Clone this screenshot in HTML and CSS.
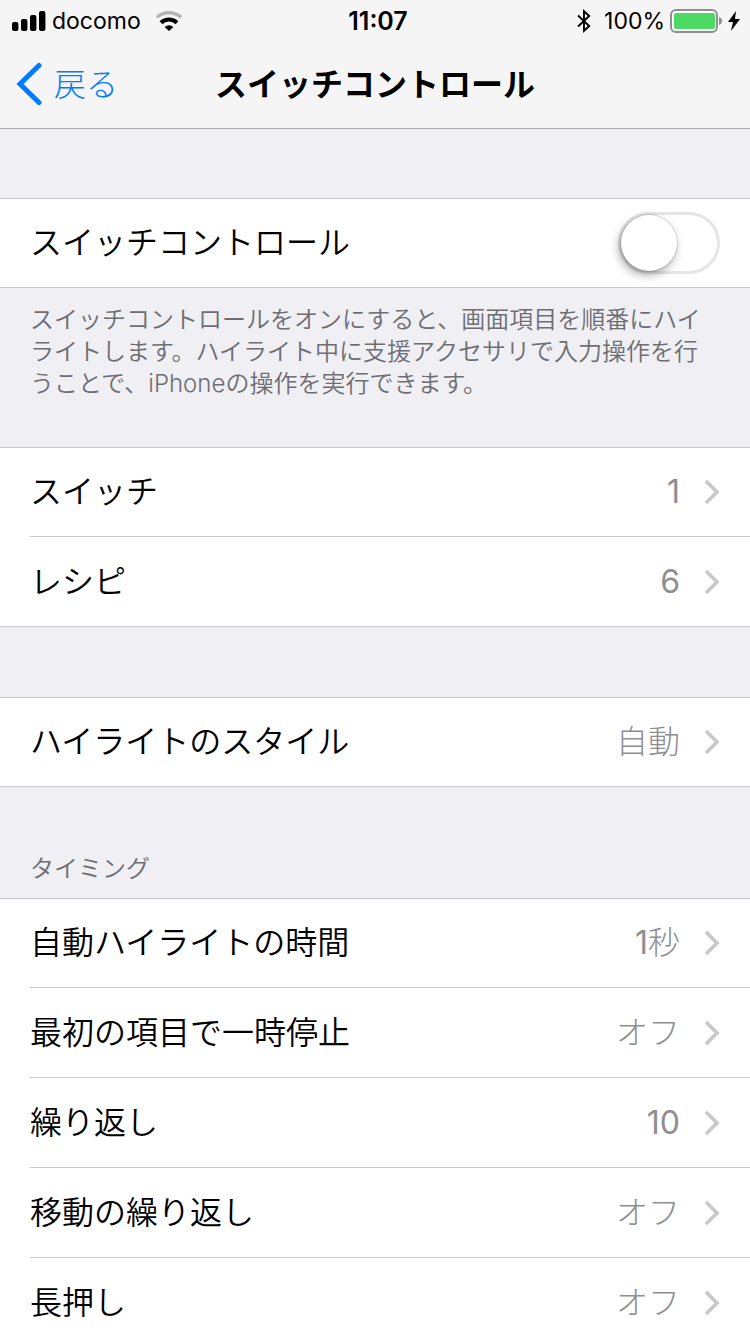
FILE: index.html
```html
<!DOCTYPE html>
<html lang="ja">
<head>
<meta charset="utf-8">
<meta name="viewport" content="width=device-width, initial-scale=1">
<title>スイッチコントロール</title>
<link rel="stylesheet" href="styles.css">
</head>
<body>
<svg class="defs" aria-hidden="true">
  <symbol id="chevron" viewBox="0 0 16 28"><path d="M2 3 13 14 2 25" fill="none" stroke="currentColor" stroke-width="3.6"/></symbol>
</svg>
<div class="screen">
  <header class="top">
    <div class="status">
      <div class="status-side">
        <svg class="signal" viewBox="0 0 34 22" width="34" height="22" aria-hidden="true">
          <rect x="0" y="12" width="6.4" height="9" rx="2"/><rect x="9" y="9" width="6.4" height="12" rx="2"/><rect x="18" y="5" width="6.4" height="16" rx="2"/><rect x="27" y="1" width="6.4" height="20" rx="2"/>
        </svg>
        <span class="carrier">docomo</span>
        <svg class="wifi" viewBox="0 0 28 20" width="28" height="20" aria-hidden="true">
          <path d="M1.800 6.200a18.800 18.800 0 0 1 24.400 0" fill="none" stroke="#b4b4b6" stroke-width="3.400"/>
          <path d="M6 11.800a11.600 11.600 0 0 1 16 0" fill="none" stroke="#000" stroke-width="4"/>
          <path d="M14 20 9.600 16q4.400-3.400 8.800 0z"/>
        </svg>
      </div>
      <time class="clock">11:07</time>
      <div class="status-side status-end">
        <svg class="bluetooth" viewBox="0 0 14 24" width="14" height="24" aria-hidden="true">
          <path d="M1 6.500 12.200 17 7 21.800V2.200L12.200 7 1 17.500" fill="none" stroke="#000" stroke-width="1.900"/>
        </svg>
        <span class="percent">100%</span>
        <svg class="battery" viewBox="0 0 53 24" width="53" height="24" aria-hidden="true">
          <rect x="1" y="1" width="46" height="22" rx="5" fill="#fff" stroke="#8e8e93" stroke-width="2"/>
          <rect x="4" y="4" width="41" height="16" rx="2" fill="#4cd964"/>
          <path d="M49 8q3 1.200 3 4t-3 4z" fill="#8e8e93"/>
        </svg>
        <svg class="bolt" viewBox="0 0 12 20" width="12" height="20" aria-hidden="true"><path d="M8 0 0 11h5L3 20l9-12H7z"/></svg>
      </div>
    </div>
    <nav class="navbar">
      <button class="back" type="button">
        <svg viewBox="0 0 26 44" width="26" height="44" aria-hidden="true"><path d="M23 3.500 4 22l19 18.500" fill="none" stroke="currentColor" stroke-width="5" stroke-linecap="round"/></svg>
        <span>戻る</span>
      </button>
      <h1 class="title">スイッチコントロール</h1>
    </nav>
  </header>
  <main class="content">
    <section class="group">
      <div class="row">
        <label class="label" for="switch-control">スイッチコントロール</label>
        <input class="toggle" id="switch-control" type="checkbox" role="switch">
      </div>
    </section>
    <p class="note">スイッチコントロールをオンにすると、画面項目を順番にハイライトします。ハイライト中に支援アクセサリで入力操作を行うことで、iPhoneの操作を実行できます。</p>
    <section class="group">
      <a class="row" href="#switches"><span class="label">スイッチ</span><span class="value number">1</span><svg class="chevron" aria-hidden="true"><use href="#chevron"/></svg></a>
      <a class="row" href="#recipes"><span class="label">レシピ</span><span class="value number">6</span><svg class="chevron" aria-hidden="true"><use href="#chevron"/></svg></a>
    </section>
    <section class="group">
      <a class="row" href="#style"><span class="label">ハイライトのスタイル</span><span class="value">自動</span><svg class="chevron" aria-hidden="true"><use href="#chevron"/></svg></a>
    </section>
    <h2 class="heading">タイミング</h2>
    <section class="group">
      <a class="row" href="#auto"><span class="label">自動ハイライトの時間</span><span class="value"><span class="number">1</span>秒</span><svg class="chevron" aria-hidden="true"><use href="#chevron"/></svg></a>
      <a class="row" href="#pause"><span class="label">最初の項目で一時停止</span><span class="value">オフ</span><svg class="chevron" aria-hidden="true"><use href="#chevron"/></svg></a>
      <a class="row" href="#loops"><span class="label">繰り返し</span><span class="value number">10</span><svg class="chevron" aria-hidden="true"><use href="#chevron"/></svg></a>
      <a class="row" href="#move"><span class="label">移動の繰り返し</span><span class="value">オフ</span><svg class="chevron" aria-hidden="true"><use href="#chevron"/></svg></a>
      <a class="row" href="#hold"><span class="label">長押し</span><span class="value">オフ</span><svg class="chevron" aria-hidden="true"><use href="#chevron"/></svg></a>
    </section>
  </main>
</div>
</body>
</html>
```
FILE: styles.css
```css
* { box-sizing: border-box; }

body {
  margin: 0;
  background: #efeff4;
  color: #000;
  font-family: Inter, "Noto Sans CJK JP", sans-serif;
  font-weight: 350;
}

.defs { position: absolute; width: 0; height: 0; }

.screen {
  display: flex;
  flex-direction: column;
  height: 100vh;
  overflow: hidden;
}

.top {
  flex: none;
  background: #f5f5f6;
  border-bottom: 1px solid #a8a8ae;
}

.status {
  display: grid;
  grid-template-columns: 1fr auto 1fr;
  align-items: center;
  height: 40px;
  padding: 2px 10px 0 12px;
  font-size: 23px;
  font-weight: 400;
}

.status-side { display: flex; align-items: center; }
.status-end { justify-content: flex-end; }
.carrier { margin: 0 14px 0 6px; }
.clock { padding-left: 4px; font-size: 25px; font-weight: 600; }
.percent { margin: 0 5px 0 13px; }
.bolt { margin-left: 5px; }

.navbar {
  display: grid;
  grid-template-columns: 1fr auto 1fr;
  align-items: center;
  height: 88px;
  padding: 0 16px;
}

.back {
  display: flex;
  align-items: center;
  justify-self: start;
  gap: 12px;
  padding: 0;
  border: 0;
  background: none;
  color: #007aff;
  font: inherit;
  font-size: 32px;
  font-weight: 300;
  line-height: 44px;
}

.back span { padding-top: 2px; }

.title {
  margin: 0;
  padding-top: 2px;
  font-size: 32px;
  font-weight: 700;
  line-height: 44px;
}

.content { flex: 1; min-height: 0; overflow: hidden; }

.group {
  margin-top: 70px;
  background: #fff;
  border-top: 1px solid #c8c7cc;
  border-bottom: 1px solid #c8c7cc;
}

.group:first-child { margin-top: 69px; }

.row {
  display: flex;
  align-items: center;
  height: 88px;
  margin-left: 30px;
  padding-right: 30px;
  color: inherit;
  font-size: 32px;
  line-height: 44px;
  text-decoration: none;
}

.row + .row {
  height: 90px;
  border-top: 1px solid #c8c7cc;
}

.label { flex: 1; }
.value { color: #8e8e93; font-weight: 300; }
.number { font-weight: 400; }

.chevron {
  width: 16px;
  height: 28px;
  margin-left: 24px;
  color: #c7c7cc;
}

.toggle {
  appearance: none;
  width: 102px;
  height: 62px;
  margin: 0;
  border: 3px solid #e5e5e5;
  border-radius: 31px;
  background: #fff;
}

.toggle::before {
  content: "";
  display: block;
  width: 56px;
  height: 56px;
  border-radius: 50%;
  background: #fff;
  box-shadow: 0 0 1px 1px rgba(0, 0, 0, 0.12), -2px 4px 10px rgba(0, 0, 0, 0.35);
}

.toggle:checked { background: #4cd964; border-color: #4cd964; }
.toggle:checked::before { margin-left: auto; }

.note {
  margin: 0;
  padding: 16px 30px 0;
  color: #6d6d72;
  font-size: 24px;
  line-height: 32px;
}

.note + .group { margin-top: 47px; }

.heading {
  margin: 0;
  padding: 66px 30px 13px;
  color: #6d6d72;
  font-size: 24px;
  font-weight: 350;
  line-height: 32px;
}

.heading + .group { margin-top: 0; }
```
